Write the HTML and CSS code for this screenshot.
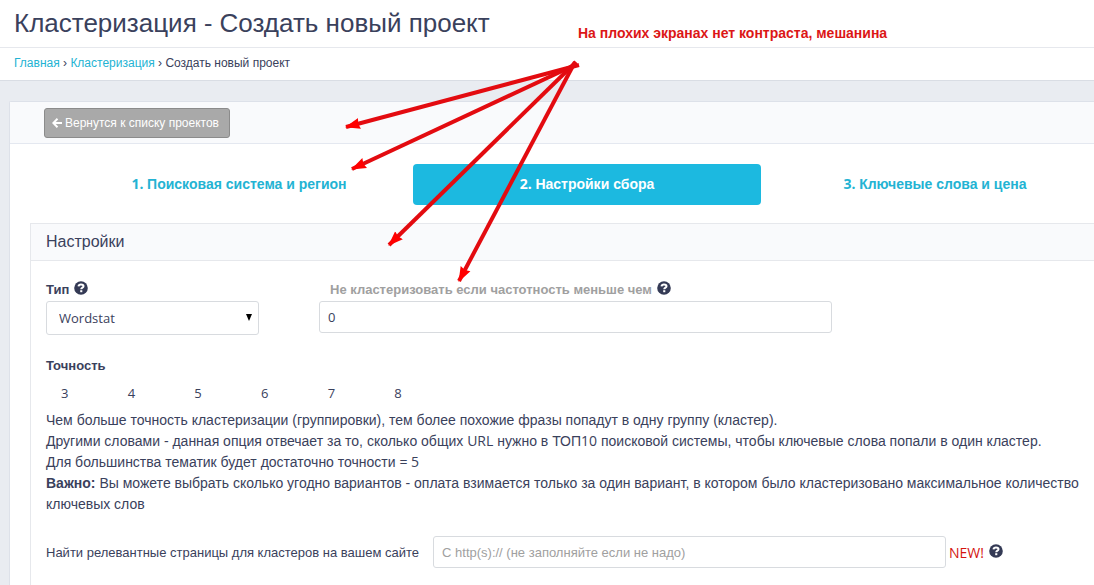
FILE: index.html
```html
<!DOCTYPE html>
<html lang="ru">
<head>
<meta charset="utf-8">
<title>Кластеризация - Создать новый проект</title>
<link rel="stylesheet" href="styles.css">
</head>
<body>
<svg class="defs" width="0" height="0" aria-hidden="true">
  <symbol id="help" viewBox="0 0 14 14">
    <circle cx="7" cy="7" r="6.8" fill="#343a55"/>
    <path d="M4.500 5.400C4.700 4 5.700 3.400 7 3.400c1.500 0 2.500.7 2.500 1.800C9.500 6.700 7.200 6.500 7.200 8.300" fill="none" stroke="#fff" stroke-width="2"/>
    <path d="M6.200 9.200h2.100v2H6.200z" fill="#fff"/>
  </symbol>
</svg>
<header class="page-head">
  <h1 class="page-title">Кластеризация <span class="lat">-</span> Создать новый проект</h1>
  <nav class="crumbs"><a href="#">Главная</a> <span>›</span> <a href="#">Кластеризация</a> <span>›</span> Создать новый проект</nav>
</header>
<main class="content">
  <section class="portlet">
    <div class="toolbar">
      <button class="back" type="button">
        <svg width="10" height="10" viewBox="0 0 10 10" aria-hidden="true"><path d="M10 5H1.500M5.500.8L1.300 5l4.200 4.200" fill="none" stroke="#fff" stroke-width="2"/></svg>
        Вернутся к списку проектов
      </button>
    </div>
    <nav class="steps">
      <a class="step" href="#"><span class="lat">1. </span>Поисковая система и регион</a>
      <a class="step active" href="#"><span class="lat">2. </span>Настройки сбора</a>
      <a class="step" href="#"><span class="lat">3. </span>Ключевые слова и цена</a>
    </nav>
    <form class="panel">
      <h2 class="panel-title">Настройки</h2>
      <div class="panel-body">
        <div class="fields">
          <div class="field">
            <div class="label-row"><label for="type">Тип</label><svg class="help" width="14" height="14"><use href="#help"/></svg></div>
            <div class="select-wrap">
              <select id="type" class="control select"><option>Wordstat</option></select>
              <svg class="caret" width="6" height="7" viewBox="0 0 6 7" aria-hidden="true"><path d="M0 0h6L3 7z"/></svg>
            </div>
          </div>
          <div class="field">
            <div class="label-row indent"><label class="muted" for="freq">Не кластеризовать если частотность меньше чем</label><svg class="help" width="14" height="14"><use href="#help"/></svg></div>
            <input id="freq" class="control" type="text" value="0">
          </div>
        </div>
        <fieldset class="accuracy">
          <legend>Точность</legend>
          <div class="levels">
            <label><input type="checkbox">3</label>
            <label><input type="checkbox">4</label>
            <label><input type="checkbox">5</label>
            <label><input type="checkbox">6</label>
            <label><input type="checkbox">7</label>
            <label><input type="checkbox">8</label>
          </div>
        </fieldset>
        <p class="note">Чем больше точность кластеризации (группировки), тем более похожие фразы попадут в одну группу (кластер).<br>
        Другими словами - данная опция отвечает за то, сколько общих <span class="lat">URL</span> нужно в ТОП<span class="lat">10</span> поисковой системы, чтобы ключевые слова попали в один кластер.<br>
        Для большинства тематик будет достаточно точности <span class="lat">= 5</span><br>
        <b>Важно:</b> Вы можете выбрать сколько угодно вариантов - оплата взимается только за один вариант, в котором было кластеризовано максимальное количество ключевых слов</p>
        <div class="site">
          <label for="site">Найти релевантные страницы для кластеров на вашем сайте</label>
          <input id="site" class="control" type="text" placeholder="С http(s):// (не заполняйте если не надо)">
          <span class="new">NEW!</span>
          <svg class="help" width="14" height="14"><use href="#help"/></svg>
        </div>
      </div>
    </form>
  </section>
</main>
<div class="remark">На плохих экранах нет контраста, мешанина</div>
<svg class="arrows" width="600" height="300" viewBox="0 0 600 300" aria-hidden="true">
  <defs>
    <marker id="head" markerUnits="userSpaceOnUse" markerWidth="16" markerHeight="12" refX="14" refY="6" orient="auto">
      <path d="M0 .5L15 6 0 11.500 1.500 6z" fill="#f00"/>
    </marker>
  </defs>
  <g stroke="#e30b10" stroke-width="4">
    <path d="M579 65L346 127" marker-end="url(#head)"/>
    <path d="M577 64L352 169" marker-end="url(#head)"/>
    <path d="M576 62L389 245" marker-end="url(#head)"/>
    <path d="M575 62L459 281" marker-end="url(#head)"/>
  </g>
</svg>
</body>
</html>
```
FILE: styles.css
```css
* { box-sizing: border-box; }
body {
  margin: 0;
  background: #e9ecf1;
  color: #3a415c;
  font: 14px/21px "Liberation Sans", Arial, sans-serif;
  overflow: hidden;
}
a { color: #23b3d3; text-decoration: none; }
.lat { font-family: "Open Sans", sans-serif; line-height: 1; }
.defs { position: absolute; }
.page-head { background: #fff; border-bottom: 1px solid #d9dde4; }
.page-title {
  margin: 0;
  padding: 0 14px;
  font-size: 26px;
  font-weight: 400;
  line-height: 47px;
  border-bottom: 1px solid #e6e8ed;
}
.crumbs { padding: 0 14px 1px; font-size: 12px; line-height: 31px; }
.content { padding: 20px 0 0 9px; }
.portlet {
  background: #fff;
  border: 1px solid #dde1e9;
  border-right: 0;
  border-radius: 2px 0 0 0;
}
.toolbar {
  padding: 6px 34px 5px;
  background: #f9fafc;
  border-bottom: 1px solid #e4e8f0;
}
.back {
  display: flex;
  align-items: center;
  gap: 3px;
  height: 30px;
  padding: 0 10px 0 7px;
  border: 1px solid #8b8b8b;
  border-radius: 3px;
  background: #a9a9a9;
  color: #fff;
  font: 12px "Liberation Sans", Arial, sans-serif;
}
.steps {
  display: grid;
  grid-template-columns: repeat(3, 1fr);
  margin: 20px -15px 18px 55px;
}
.step {
  border-radius: 4px;
  font-weight: 700;
  line-height: 41px;
  text-align: center;
}
.step.active { background: #1cb9e0; color: #fff; }
.panel {
  margin-left: 20px;
  border: 1px solid #e6e8ec;
  border-right: 0;
}
.panel-title {
  margin: 0;
  padding: 0 15px;
  background: #f9fafc;
  border-bottom: 1px solid #e6e8ec;
  font-size: 16px;
  font-weight: 400;
  line-height: 36px;
}
.panel-body { padding: 20px 15px; font-size: 13px; }
.fields { display: grid; grid-template-columns: 213px 513px; gap: 60px; }
.label-row { display: flex; gap: 5px; height: 20px; font-weight: 700; line-height: 18px; }
.label-row.indent { padding-left: 11px; }
.muted { color: #a0a0a0; }
.help { flex: none; }
.select-wrap { position: relative; }
.control {
  display: block;
  width: 100%;
  height: 32px;
  padding: 0 8px;
  border: 1px solid #d8dbdf;
  border-radius: 3px;
  background: #fff;
  color: #3a415c;
  font: 13px "Open Sans", sans-serif;
}
.control::placeholder { color: #a0a0a0; opacity: 1; font-family: "Liberation Sans", Arial, sans-serif; }
.select { height: 34px; padding: 0 12px; appearance: none; }
.caret { position: absolute; right: 7px; top: 13px; }
.accuracy { margin: 20px 0 0; padding: 0; border: 0; }
.accuracy legend { padding: 0; font-weight: 700; }
.levels {
  display: grid;
  grid-template-columns: repeat(6, 1fr);
  width: 415px;
  padding: 7px 0 6px 15px;
  font-family: "Open Sans", sans-serif;
}
.levels input { appearance: none; width: 0; margin: 0; }
.note { margin: 0 0 21px; font-size: 14px; }
.site { display: flex; align-items: center; }
.site .control { flex: 0 1 513px; margin: 0 3px 0 14px; }
.site .help { margin-bottom: 3px; }
.new { margin-right: 5px; color: #d4140f; font: 14px "Open Sans", sans-serif; }
.remark {
  position: absolute;
  left: 578px;
  top: 23px;
  color: #dc1616;
  font-weight: 700;
}
.arrows { position: absolute; left: 0; top: 0; pointer-events: none; }
```
